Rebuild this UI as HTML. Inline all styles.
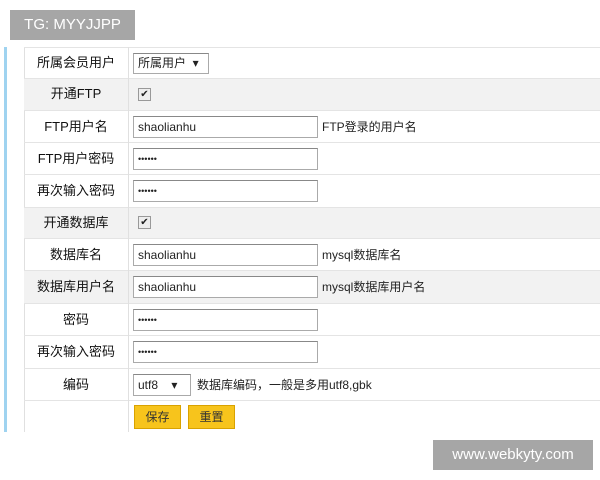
<!DOCTYPE html>
<html><head><meta charset="utf-8"><style>
body{margin:0;width:600px;height:480px;background:#fff;position:relative;overflow:hidden;font-family:"Liberation Sans","Noto Sans CJK SC",sans-serif;}
.a{position:absolute}
.row{position:absolute;left:24px;width:576px;border-top:1px solid #e4e4e4;}
.row.g{background:#f2f2f2}
.lb{position:absolute;left:0;width:104px;text-align:center;font-size:13px;color:#111;line-height:16px}
.in{position:absolute;left:109px;border:1px solid #aaa;border-top-color:#888;background:#fff;font-size:12px;padding-left:4px;color:#222;box-sizing:border-box;width:185px;height:22px;line-height:20px}
.tx{position:absolute;font-size:12px;color:#222;line-height:16px}
.cb{position:absolute;left:114px;width:11px;height:11px;border:1px solid #999;background:#eee;font-size:10px;line-height:11px;text-align:center;color:#222}
.btn{position:absolute;background:#f7c41c;border:1px solid #d9a200;font-size:12px;color:#333;text-align:center;line-height:22px;height:22px}
</style></head><body>
<div class="a" style="left:4px;top:47px;width:3px;height:385px;background:#9fd3f0"></div>
<div class="a" style="left:24px;top:47px;width:1px;height:385px;background:#e0e0e0"></div>
<div class="a" style="left:128px;top:47px;width:1px;height:385px;background:#e0e0e0;z-index:2"></div>

<div class="row" style="top:47px;height:31px"><div class="lb" style="top:7px">所属会员用户</div>
<div class="in" style="width:76px;height:21px;top:5px;line-height:19px">所属用户 &nbsp;▾</div></div>
<div class="row g" style="top:78px;height:32px"><div class="lb" style="top:7px">开通FTP</div><div class="cb" style="top:9px">✔</div></div>
<div class="row" style="top:110px;height:32px"><div class="lb" style="top:8px">FTP用户名</div><div class="in" style="top:5px">shaolianhu</div><div class="tx" style="left:298px;top:8px">FTP登录的用户名</div></div>
<div class="row" style="top:142px;height:32px"><div class="lb" style="top:8px">FTP用户密码</div><div class="in" style="top:5px;font-size:9px">••••••</div></div>
<div class="row" style="top:174px;height:33px"><div class="lb" style="top:8px">再次输入密码</div><div class="in" style="top:5px;font-size:9px">••••••</div></div>
<div class="row g" style="top:207px;height:31px"><div class="lb" style="top:7px">开通数据库</div><div class="cb" style="top:8px">✔</div></div>
<div class="row" style="top:238px;height:32px"><div class="lb" style="top:8px">数据库名</div><div class="in" style="top:5px">shaolianhu</div><div class="tx" style="left:298px;top:8px">mysql数据库名</div></div>
<div class="row g" style="top:270px;height:33px"><div class="lb" style="top:8px">数据库用户名</div><div class="in" style="top:5px">shaolianhu</div><div class="tx" style="left:298px;top:8px">mysql数据库用户名</div></div>
<div class="row" style="top:303px;height:32px"><div class="lb" style="top:8px">密码</div><div class="in" style="top:5px;font-size:9px">••••••</div></div>
<div class="row" style="top:335px;height:33px"><div class="lb" style="top:8px">再次输入密码</div><div class="in" style="top:5px;font-size:9px">••••••</div></div>
<div class="row" style="top:368px;height:32px"><div class="lb" style="top:8px">编码</div>
<div class="in" style="width:58px;top:5px">utf8 &nbsp;&nbsp;&nbsp;▾</div><div class="tx" style="left:173px;top:8px">数据库编码，一般是多用utf8,gbk</div></div>
<div class="row" style="top:400px;height:32px">
<div class="btn" style="left:110px;top:4px;width:45px">保存</div>
<div class="btn" style="left:164px;top:4px;width:45px">重置</div></div>

<div class="a" style="left:10px;top:10px;width:125px;height:30px;background:#a6a6a6;color:#fff;font-size:15px;line-height:30px;text-align:center">TG: MYYJJPP</div>
<div class="a" style="left:433px;top:440px;width:160px;height:30px;background:#a6a6a6;color:#fff;font-size:15px;line-height:30px;text-align:center">www.webkyty.com</div>
</body></html>
